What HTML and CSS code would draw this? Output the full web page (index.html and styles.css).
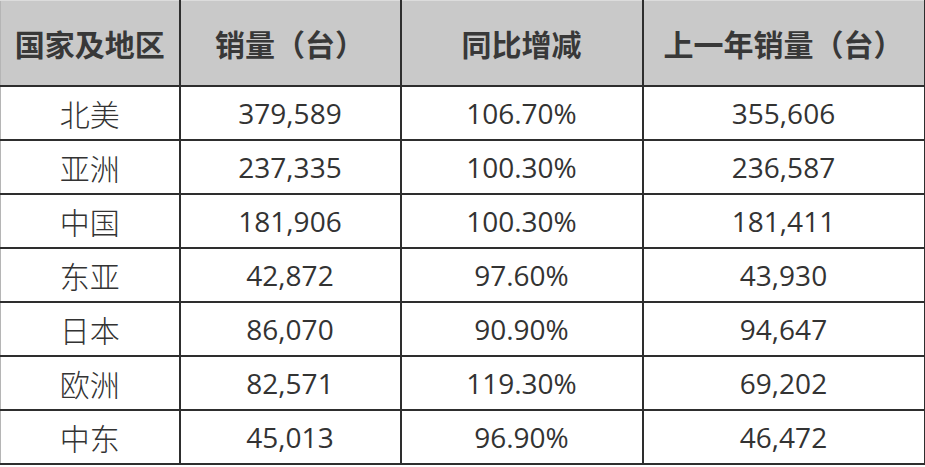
FILE: index.html
```html
<!DOCTYPE html>
<html lang="zh">
<head>
<meta charset="utf-8">
<link rel="stylesheet" href="styles.css">
</head>
<body>
<table class="sales">
  <colgroup>
    <col class="c1"><col class="c2"><col class="c3"><col class="c4">
  </colgroup>
  <thead>
    <tr><th>国家及地区</th><th>销量（台）</th><th>同比增减</th><th>上一年销量（台）</th></tr>
  </thead>
  <tbody>
    <tr><td>北美</td><td>379,589</td><td>106.70%</td><td>355,606</td></tr>
    <tr><td>亚洲</td><td>237,335</td><td>100.30%</td><td>236,587</td></tr>
    <tr><td>中国</td><td>181,906</td><td>100.30%</td><td>181,411</td></tr>
    <tr><td>东亚</td><td>42,872</td><td>97.60%</td><td>43,930</td></tr>
    <tr><td>日本</td><td>86,070</td><td>90.90%</td><td>94,647</td></tr>
    <tr><td>欧洲</td><td>82,571</td><td>119.30%</td><td>69,202</td></tr>
    <tr><td>中东</td><td>45,013</td><td>96.90%</td><td>46,472</td></tr>
  </tbody>
</table>
</body>
</html>
```
FILE: styles.css
```css
html, body {
  margin: 0;
  padding: 0;
  background: #ffffff;
}
.sales {
  border-collapse: collapse;
  table-layout: fixed;
  width: 924px;
  font-family: "Open Sans", "Noto Sans CJK SC", sans-serif;
  color: #333333;
}
.c1 { width: 179px; }
.c2 { width: 221px; }
.c3 { width: 242px; }
.c4 { width: 282px; }
.sales th,
.sales td {
  border: 2px solid #2e2e2e;
  text-align: center;
  padding: 0;
}
.sales th {
  background: #c9c9c9;
  height: 84px;
  font-family: "Noto Sans CJK SC", sans-serif;
  font-weight: 700;
  font-size: 30px;
  color: #383838;
  border-top: 1px solid #dcdcdc;
}
.sales td {
  height: 52px;
  font-size: 28px;
  line-height: 1;
}
.sales tr > :first-child {
  border-left: 1px solid #b5b5b5;
}
.sales td:first-child {
  font-family: "Noto Sans CJK SC", sans-serif;
  font-weight: 300;
  font-size: 30px;
}
```
